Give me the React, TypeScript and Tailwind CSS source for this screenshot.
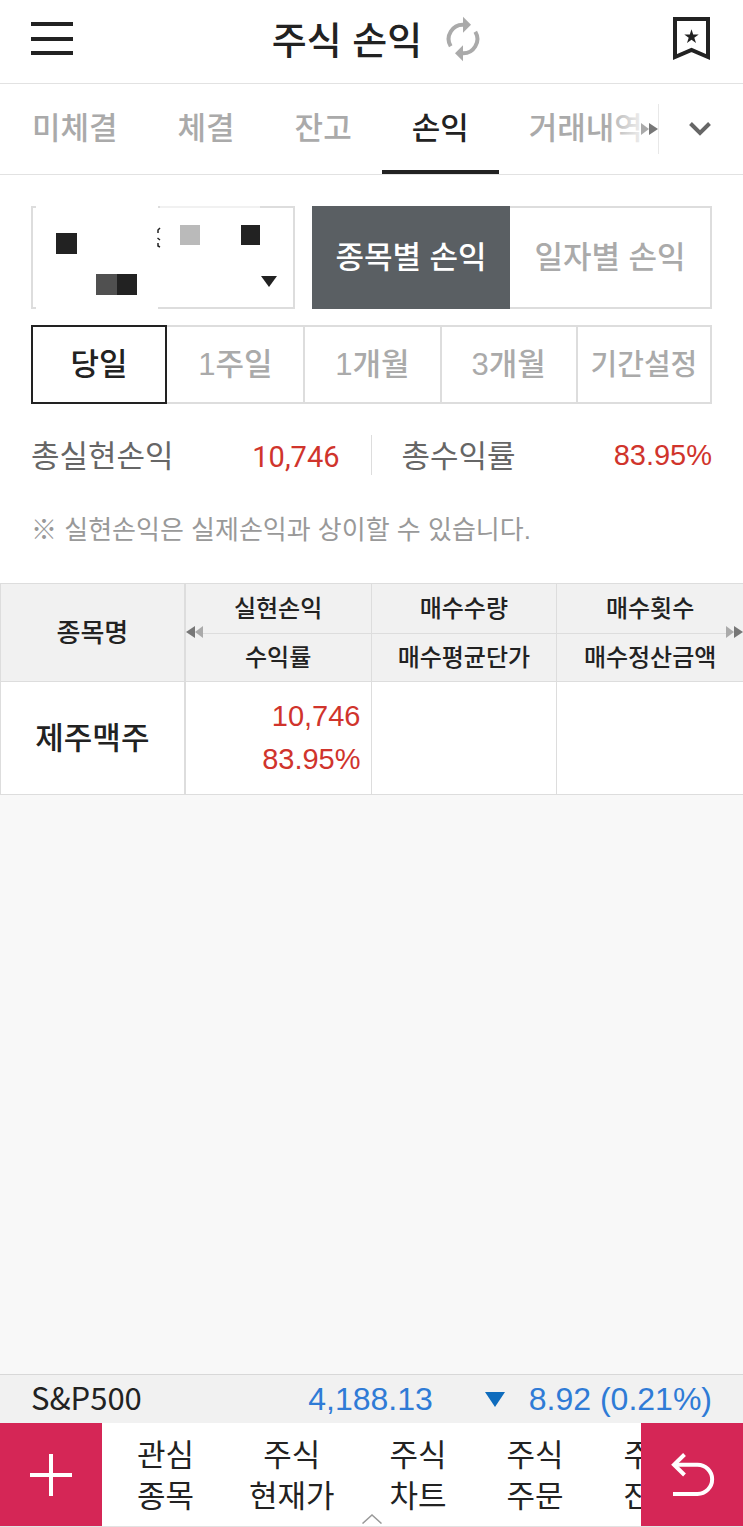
import React, { useState } from 'react';

const TABS = ['미체결', '체결', '잔고', '손익', '거래내역'];
const PERIODS = ['당일', '1주일', '1개월', '3개월', '기간설정'];
const MENUS = [
  ['관심', '종목'],
  ['주식', '현재가'],
  ['주식', '차트'],
  ['주식', '주문'],
  ['주식', '잔고'],
];

function MenuIcon() {
  return (
    <svg width="42" height="34" viewBox="0 0 42 34" fill="#222">
      <rect y="0" width="42" height="4" />
      <rect y="15" width="42" height="4" />
      <rect y="29" width="42" height="4" />
    </svg>
  );
}

function RefreshIcon() {
  return (
    <svg width="34" height="46" viewBox="0 0 34 46">
      <g fill="none" stroke="#aaa" strokeWidth="4">
        <path d="M4.7 30.3A14.3 14.3 0 0 1 18 8.7" />
        <path d="M29.3 15.7A14.3 14.3 0 0 1 16 37.3" />
      </g>
      <path d="M17 .7L25 8.7L17 16.7ZM17 45.3L9 37.3L17 29.3Z" fill="#aaa" />
    </svg>
  );
}

function BookmarkIcon() {
  return (
    <svg width="37" height="44" viewBox="0 0 37 44">
      <path d="M2 2H35V40L18.5 33L2 40Z" fill="none" stroke="#222" strokeWidth="4" />
      <path
        d="M18.5 12.2L20.2 17.5L25.7 17.5L21.3 20.7L23 25.9L18.5 22.7L14 25.9L15.7 20.7L11.3 17.5L16.8 17.5Z"
        fill="#222"
      />
    </svg>
  );
}

function DoubleArrow({ left = false }: { left?: boolean }) {
  return (
    <svg width="17" height="12" viewBox="0 0 17 12" className={left ? 'rotate-180' : ''}>
      <path d="M0 0L8 6L0 12Z" fill="#aaa" />
      <path d="M8 0L17 6L8 12Z" fill="#777" />
    </svg>
  );
}

// account name and number stay hidden behind mosaic blocks
function AccountMask() {
  return (
    <svg width="230" height="103" viewBox="0 0 230 103" className="absolute -top-0.5 -left-0.5 pointer-events-none">
      <rect x="5" y="0" width="122" height="103" fill="#fff" />
      <rect x="129" y="0" width="100" height="2" fill="#f1f1f1" />
      <rect x="25" y="27" width="21" height="21" fill="#222" />
      <rect x="65" y="68" width="21" height="21" fill="#505050" />
      <rect x="86" y="68" width="20" height="21" fill="#222" />
      <rect x="149" y="19" width="20" height="20" fill="#bababa" />
      <rect x="210" y="19" width="19" height="20" fill="#222" />
      <path d="M129 22L127 24V27M126.5 32L129 34M127 37V40L129 41" fill="none" stroke="#222" strokeWidth="1.5" />
    </svg>
  );
}

export default function App() {
  const [tab, setTab] = useState('손익');
  const [mode, setMode] = useState('종목별 손익');
  const [period, setPeriod] = useState('당일');

  return (
    <div className="flex min-h-screen flex-col bg-[#f8f8f8] font-['Liberation_Sans','Noto_Sans_CJK_KR',sans-serif] text-[#222]">
      <header className="flex h-[84px] items-center justify-between border-b border-[#e2e2e2] bg-white pr-[33px] pb-1.5 pl-[31px]">
        <button aria-label="메뉴">
          <MenuIcon />
        </button>
        <div className="flex items-center gap-6 pl-1.5">
          <h1 className="pt-1 text-[38px] leading-[48px] font-medium">주식 손익</h1>
          <button aria-label="새로고침">
            <RefreshIcon />
          </button>
        </div>
        <button aria-label="관심화면">
          <BookmarkIcon />
        </button>
      </header>

      <nav className="flex h-[91px] border-b border-[#e2e2e2] bg-white">
        <div className="relative flex min-w-0 flex-1 overflow-hidden pl-0.5">
          {TABS.map(t => (
            <button
              key={t}
              onClick={() => setTab(t)}
              className={`shrink-0 border-b-4 px-[30px] pt-1 text-[31px] leading-10 font-medium ${
                t === tab ? 'border-[#222] text-[#222]' : 'border-transparent text-[#aaa]'
              }`}
            >
              {t}
            </button>
          ))}
          <div className="pointer-events-none absolute inset-y-0 right-0 w-9 bg-linear-to-r from-white/0 to-white/80" />
        </div>
        <div className="flex items-center">
          <DoubleArrow />
          <div className="h-[50px] w-px bg-[#e8e8e8]" />
          <button aria-label="탭 펼치기" className="pr-8 pl-[30px]">
            <svg width="22" height="14" viewBox="0 0 22 14" fill="none" stroke="#666" strokeWidth="4">
              <path d="M1.5 1.5L11 11L20.5 1.5" />
            </svg>
          </button>
        </div>
      </nav>

      <section className="bg-white px-[31px] pt-[31px] pb-[33px]">
        <div className="grid h-[103px] grid-cols-[264fr_400fr] gap-[17px]">
          <div className="relative border-2 border-[#ddd]">
            <select aria-label="계좌 선택" className="absolute inset-0 h-full w-full appearance-none bg-transparent">
              <option value="" />
            </select>
            <AccountMask />
            <svg width="16" height="11" viewBox="0 0 16 11" className="pointer-events-none absolute right-4 bottom-5">
              <path d="M0 0H16L8 11Z" fill="#222" />
            </svg>
          </div>
          <div className="grid grid-cols-[198fr_202fr]">
            {['종목별 손익', '일자별 손익'].map(m => (
              <button
                key={m}
                onClick={() => setMode(m)}
                className={`border-2 text-[31px] leading-10 font-medium ${
                  m === mode ? 'border-[#5a5f63] bg-[#5a5f63] text-white' : 'border-l-0 border-[#ddd] text-[#aaa]'
                }`}
              >
                {m}
              </button>
            ))}
          </div>
        </div>

        <div className="mt-4 grid h-[79px] grid-cols-5">
          {PERIODS.map(p => (
            <button
              key={p}
              onClick={() => setPeriod(p)}
              className={`border-2 leading-10 font-medium ${p.length > 3 ? 'text-[29px]' : 'text-[31px]'} ${
                p === period
                  ? 'border-[#222] text-[#222]'
                  : 'border-[#ddd] text-[#aaa] not-last:border-r-0 nth-2:border-l-0'
              }`}
            >
              {p}
            </button>
          ))}
        </div>

        <dl className="mt-[31px] grid h-10 grid-cols-2 items-center text-[31px] leading-10 text-[#666]">
          <div className="flex h-10 items-center justify-between border-r border-[#ddd] pr-[31px]">
            <dt className="pt-1">총실현손익</dt>
            <dd className="pt-1 font-[Roboto,sans-serif] text-[29px] text-[#d0342c]">10,746</dd>
          </div>
          <div className="flex h-10 items-center justify-between pl-[30px]">
            <dt className="pt-1">총수익률</dt>
            <dd className="text-[29px] text-[#d0342c]">83.95%</dd>
          </div>
        </dl>

        <p className="mt-[35px] text-[26px] leading-10 text-[#999]">※ 실현손익은 실제손익과 상이할 수 있습니다.</p>
      </section>

      <div className="relative">
        <table className="w-full table-fixed border-separate border-spacing-0 border-l border-[#ddd] bg-white">
          <thead className="bg-[#f1f1f1] text-2xl leading-8">
            <tr className="h-[50px]">
              <th rowSpan={2} className="w-[24.9%] border-y border-r-2 border-[#ddd] text-[26px] font-medium">
                종목명
              </th>
              <th className="border-t border-r border-[#ddd] font-medium">실현손익</th>
              <th className="border-t border-r border-[#ddd] font-medium">매수수량</th>
              <th className="border-t border-[#ddd] font-medium">매수횟수</th>
            </tr>
            <tr className="h-[49px]">
              <th className="border-y border-r border-[#ddd] font-medium">수익률</th>
              <th className="border-y border-r border-[#ddd] font-medium">매수평균단가</th>
              <th className="border-y border-[#ddd] font-medium">매수정산금액</th>
            </tr>
          </thead>
          <tbody>
            <tr className="h-[113px]">
              <td className="border-r-2 border-b border-[#ddd] pt-0.5 text-center text-[31px] leading-10 font-medium">
                제주맥주
              </td>
              <td className="border-r border-b border-[#ddd] pr-2.5 text-right text-[29px] leading-[43px] text-[#d0342c]">
                <div>10,746</div>
                <div>83.95%</div>
              </td>
              <td className="border-r border-b border-[#ddd]" />
              <td className="border-b border-[#ddd]" />
            </tr>
          </tbody>
        </table>
        <div className="absolute top-[43px] left-1/4 bg-[#f1f1f1]">
          <DoubleArrow left />
        </div>
        <div className="absolute top-[43px] right-0 bg-[#f1f1f1]">
          <DoubleArrow />
        </div>
      </div>

      <footer className="mt-auto">
        <div className="flex h-[49px] items-center border-t border-[#d8d8d8] bg-[#f1f1f1] px-[31px] text-[32px] leading-10 text-[#2f7bd6]">
          <span className="flex-1 pb-1 font-['Noto_Sans_CJK_KR',sans-serif] text-[31px] text-[#222]">S&amp;P500</span>
          <span className="mr-[52px]">4,188.13</span>
          <svg width="20" height="15" viewBox="0 0 20 15" className="mr-6">
            <path d="M0 0H20L10 15Z" fill="#0f6cbd" />
          </svg>
          <span>8.92 (0.21%)</span>
        </div>
        <nav className="relative flex h-[104px] border-b border-[#e2e2e2] bg-white">
          <button aria-label="추가" className="flex w-[102px] shrink-0 items-center justify-center bg-[#d52656]">
            <svg width="42" height="42" viewBox="0 0 42 42" stroke="#fff" strokeWidth="4">
              <path d="M21 0V42M0 21H42" />
            </svg>
          </button>
          <div className="flex min-w-0 flex-1 items-center overflow-hidden pt-0.5 pl-[5px]">
            {MENUS.map(([top, bottom]) => (
              <a
                key={top + bottom}
                href="#"
                className="min-w-[117px] shrink-0 px-[25px] text-center text-[31px] leading-[41px]"
              >
                {top}
                <br />
                {bottom}
              </a>
            ))}
          </div>
          <button aria-label="뒤로" className="flex w-[102px] shrink-0 items-center justify-center bg-[#d52656]">
            <svg width="46" height="46" viewBox="0 0 46 46" fill="none" stroke="#fff" strokeWidth="4">
              <path d="M15.5 2.5L5 12.7L15.5 23" />
              <path d="M5 12.7H28.5A14.6 14.6 0 0 1 28.5 42H4" />
            </svg>
          </button>
          <svg
            width="20"
            height="10"
            viewBox="0 0 20 10"
            fill="none"
            stroke="#999"
            strokeWidth="1.5"
            className="absolute bottom-0.5 left-1/2 -translate-x-1/2"
          >
            <path d="M.5 9.5L10 1L19.5 9.5" />
          </svg>
        </nav>
      </footer>
    </div>
  );
}
